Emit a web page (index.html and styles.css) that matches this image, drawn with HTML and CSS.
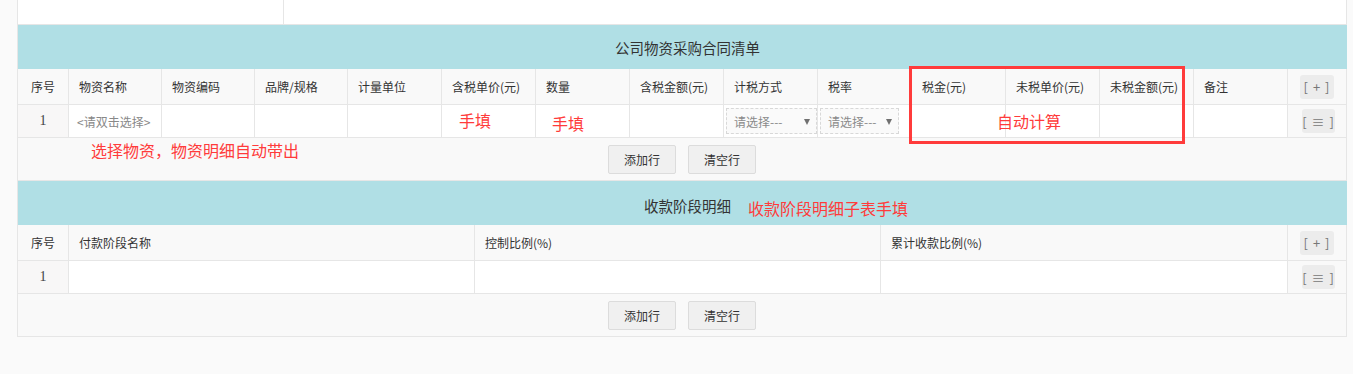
FILE: index.html
```html
<!DOCTYPE html>
<html lang="zh-CN">
<head>
<meta charset="utf-8">
<title>公司物资采购合同清单</title>
<link rel="stylesheet" href="styles.css">
</head>
<body>
<div class="page">
  <div class="sheet">
    <div class="prev"><div class="prev-a"></div><div class="prev-b"></div></div>

    <section class="sub sub-goods">
      <div class="band">公司物资采购合同清单</div>
      <div class="th c-idx">序号</div>
      <div class="th">物资名称</div>
      <div class="th">物资编码</div>
      <div class="th">品牌/规格</div>
      <div class="th">计量单位</div>
      <div class="th">含税单价(元)</div>
      <div class="th">数量</div>
      <div class="th">含税金额(元)</div>
      <div class="th">计税方式</div>
      <div class="th">税率</div>
      <div class="th">税金(元)</div>
      <div class="th">未税单价(元)</div>
      <div class="th">未税金额(元)</div>
      <div class="th">备注</div>
      <div class="th c-op"><span class="mini">[ + ]</span></div>

      <div class="td c-idx">1</div>
      <div class="td td-name"><span class="ph">&lt;请双击选择&gt;</span></div>
      <div class="td"></div>
      <div class="td"></div>
      <div class="td"></div>
      <div class="td"></div>
      <div class="td"></div>
      <div class="td"></div>
      <div class="td td-sel"><span class="sel sel-wide">请选择---<i class="arrow"></i></span></div>
      <div class="td td-sel"><span class="sel sel-narrow">请选择---<i class="arrow"></i></span></div>
      <div class="td"></div>
      <div class="td"></div>
      <div class="td"></div>
      <div class="td"></div>
      <div class="td c-op"><span class="mini mini-row">[ ≡ ]</span></div>

      <div class="foot"><button class="btn">添加行</button><button class="btn">清空行</button></div>
    </section>

    <section class="sub sub-pay">
      <div class="band band-2">收款阶段明细</div>
      <div class="th c-idx">序号</div>
      <div class="th">付款阶段名称</div>
      <div class="th">控制比例(%)</div>
      <div class="th">累计收款比例(%)</div>
      <div class="th c-op"><span class="mini">[ + ]</span></div>

      <div class="td c-idx">1</div>
      <div class="td"></div>
      <div class="td"></div>
      <div class="td"></div>
      <div class="td c-op"><span class="mini mini-row">[ ≡ ]</span></div>

      <div class="foot"><button class="btn">添加行</button><button class="btn">清空行</button></div>
    </section>
  </div>

  <div class="note note-select">选择物资，物资明细自动带出</div>
  <div class="note note-fill1">手填</div>
  <div class="note note-fill2">手填</div>
  <div class="note note-auto">自动计算</div>
  <div class="note note-pay">收款阶段明细子表手填</div>
  <div class="mark"></div>
</div>
</body>
</html>
```

FILE: styles.css
```css
* { box-sizing: border-box; }

body {
  margin: 0;
  background: #fafafa;
  font-family: "Noto Sans CJK SC", "Microsoft YaHei", sans-serif;
  font-size: 12px;
  color: #333;
}

.page {
  position: relative;
  height: 374px;
}

.sheet {
  margin-left: 17px;
  width: 1330px;
}

.prev {
  display: flex;
  height: 25px;
  background: #fff;
  border: 1px solid #e6e6e6;
  border-top: 0;
}

.prev-a {
  width: 266px;
  border-right: 1px solid #e6e6e6;
}

.sub {
  display: grid;
  border-left: 1px solid #e6e6e6;
  grid-template-rows: 44px 36px 33px 43px;
}

.sub-goods {
  grid-template-columns: 51px 93px 93px 93px repeat(10, 94px) 59px;
}

.sub-pay {
  grid-template-columns: 51px 406px 406px 407px 59px;
}

.band {
  grid-column: 1 / -1;
  background: #b0dfe5;
  display: flex;
  align-items: center;
  justify-content: center;
  padding-left: 10px;
  font-size: 14.5px;
  color: #333;
}

.band-2 {
  padding-top: 4px;
}

.th,
.td {
  display: flex;
  align-items: center;
  padding: 0 10px;
  border-right: 1px solid #e6e6e6;
  border-bottom: 1px solid #e6e6e6;
  white-space: nowrap;
}

.th {
  background: #f9f9f9;
}

.td {
  background: #fff;
}

.c-idx {
  justify-content: center;
  padding: 0;
}

.td.c-idx {
  background: #f8f7f7;
  font-family: "Liberation Serif", serif;
  font-size: 14px;
  color: #444;
}

.c-op {
  justify-content: center;
  padding: 0;
}

.th.c-op,
.td.c-op {
  background: #f9f9f9;
}

.mini {
  display: flex;
  align-items: center;
  justify-content: center;
  width: 34px;
  height: 24px;
  background: #ececec;
  border-radius: 3px;
  color: #777;
  font-size: 13px;
  letter-spacing: 1px;
  padding-left: 1px;
  margin-right: 1px;
}

.mini-row {
  width: 33px;
  margin-right: 0;
  margin-left: 2px;
}

.td-name {
  padding-left: 8px;
}

.ph {
  color: #888;
}

.td-sel {
  padding: 0 0 0 2px;
}

.sel {
  position: relative;
  display: flex;
  align-items: center;
  height: 26px;
  padding-left: 7px;
  background: #fafafa;
  border: 1px dashed #d8d8d8;
  color: #8a8a8a;
  font-size: 12px;
}

.sel-wide { width: 91px; }
.sel-narrow { width: 79px; }

.arrow {
  position: absolute;
  right: 6px;
  top: 10px;
  width: 0;
  height: 0;
  border-left: 3px solid transparent;
  border-right: 3px solid transparent;
  border-top: 6px solid #707070;
}

.foot {
  grid-column: 1 / -1;
  display: flex;
  align-items: center;
  justify-content: center;
  gap: 12px;
  background: #f9f9f9;
  border-right: 1px solid #e6e6e6;
  border-bottom: 1px solid #e6e6e6;
}

.btn {
  width: 68px;
  height: 29px;
  background: #f0f0f0;
  border: 1px solid #dcdcdc;
  border-radius: 2px;
  font-family: "Noto Sans CJK SC", "Microsoft YaHei", sans-serif;
  font-size: 12px;
  color: #333;
  padding: 0;
}

.note {
  position: absolute;
  color: #ff3b3b;
  font-size: 16px;
  line-height: 16px;
  white-space: nowrap;
}

.note-select { left: 91px; top: 142px; }
.note-fill1 { left: 459px; top: 112px; }
.note-fill2 { left: 552px; top: 115px; }
.note-auto { left: 997px; top: 113px; }
.note-pay { left: 748px; top: 200px; }

.mark {
  position: absolute;
  left: 909px;
  top: 66px;
  width: 276px;
  height: 78px;
  border: 3px solid #ff3b3b;
}
```
